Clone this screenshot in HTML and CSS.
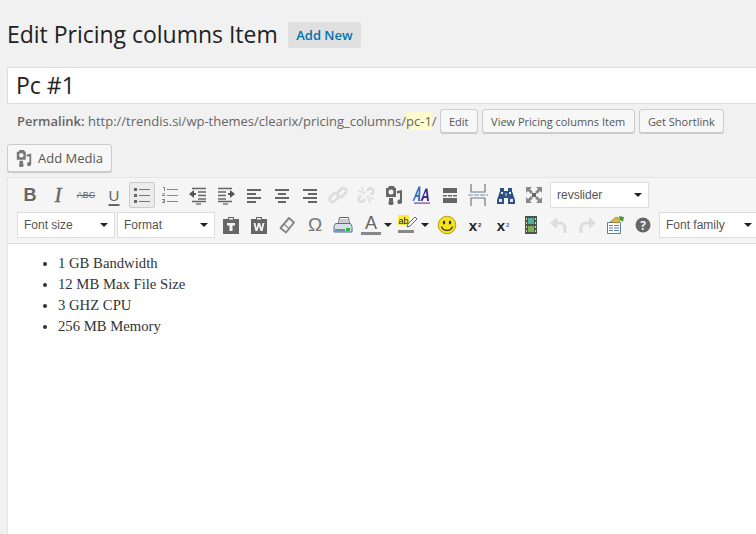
FILE: index.html
```html
<!DOCTYPE html>
<html lang="en">
<head>
<meta charset="utf-8">
<title>Edit Pricing columns Item</title>
<link rel="stylesheet" href="styles.css">
</head>
<body>
<main class="wrap">
  <header class="head">
    <h1 class="title">Edit Pricing columns Item</h1>
    <a class="add-new">Add New</a>
  </header>
  <div class="title-input">Pc #1</div>
  <div class="permalink">
    <span class="perm-text"><strong class="perm-label">Permalink:</strong> http://trendis.si/wp-themes/clearix/pricing_columns/<span class="slug">pc-1</span>/</span>
    <button class="btn">Edit</button>
    <button class="btn">View Pricing columns Item</button>
    <button class="btn">Get Shortlink</button>
  </div>
  <button class="btn btn-media">
    <svg class="media-ic" viewBox="0 0 20 20"><path fill="#777" d="M2 3h2l1-2h5l1 2h1v9H2zM5 13h4v3.500a2.500 2.500 0 1 1-4 0zM13 6l5-1v11.500a2.300 2.300 0 1 1-2-2V8l-3 .6z"/><circle cx="7" cy="7" r="2.500" fill="#f7f7f7"/></svg>
    Add Media
  </button>
  <section class="editor">
    <div class="toolbar">
      <div class="row">
        <span class="tb t-b">B</span>
        <span class="tb t-i">I</span>
        <span class="tb t-abc">ABC</span>
        <span class="tb t-u">U</span>
        <span class="tb active"><svg class="ic" viewBox="0 0 20 20"><path fill="#666" d="M2 3h3v3H2zM2 9h3v3H2zM2 15h3v3H2z"/><path stroke="#777" stroke-width="1.200" d="M7 4.500h11M7 10.500h11M7 16.500h11"/></svg></span>
        <span class="tb"><svg class="ic" viewBox="0 0 20 20"><path fill="#888" d="M3 2h2v4H4V3H3zM2 8h3v1l-2 1h2v1H2v-1l2-1v-.5H2zM2 14h3v4H2v-1h2v-.5H3v-1h1V15H2z"/><path stroke="#888" stroke-width="1.200" d="M7 4.500h11M7 10.500h11M7 16.500h11"/></svg></span>
        <span class="tb"><svg class="ic" viewBox="0 0 20 20"><path fill="#555" d="M1 9l5-4v3h2v2H6v3z"/><path stroke="#666" stroke-width="1.600" d="M4 3.500h14M10 7h8M10 10.500h8M10 14h8M4 16.500h14"/><path stroke="#666" stroke-width="1.300" d="M8 19h5"/></svg></span>
        <span class="tb"><svg class="ic" viewBox="0 0 20 20"><path fill="#555" d="M19 9l-5-4v3h-2v2h2v3z"/><path stroke="#666" stroke-width="1.600" d="M2 3.500h14M2 7h8M2 10.500h8M2 14h8M2 16.500h14"/><path stroke="#666" stroke-width="1.300" d="M7 19h5"/></svg></span>
        <span class="tb"><svg class="ic" viewBox="0 0 20 20"><path stroke="#666" stroke-width="2" d="M3 5h14M3 9h9M3 13h14M3 17h9"/></svg></span>
        <span class="tb"><svg class="ic" viewBox="0 0 20 20"><path stroke="#666" stroke-width="2" d="M3 5h14M6 9h8M3 13h14M6 17h8"/></svg></span>
        <span class="tb"><svg class="ic" viewBox="0 0 20 20"><path stroke="#666" stroke-width="2" d="M3 5h14M8 9h9M3 13h14M8 17h9"/></svg></span>
        <span class="tb"><svg class="ic" viewBox="0 0 20 20"><g fill="none" stroke="#ddd" stroke-width="2.600"><rect x="9" y="4.500" width="10" height="6" rx="3" transform="rotate(-45 14 7.500)"/><rect x="1" y="9.500" width="10" height="6" rx="3" transform="rotate(-45 6 12.500)"/></g></svg></span>
        <span class="tb"><svg class="ic" viewBox="0 0 20 20"><path fill="none" stroke="#ddd" stroke-width="2.600" d="M11 6l2-2.500a3 3 0 0 1 4 4L15 9.500M9 14l-2 2.500a3 3 0 0 1-4-4L5 10.500"/><path fill="none" stroke="#ddd" stroke-width="1.800" d="M2 6l4 1M6 2l1 4M14 18l-1-4M18 14l-4-1M11 11l2 2M9 9L7 7"/></svg></span>
        <span class="tb"><svg class="ic" viewBox="0 0 20 20"><path fill="#666" d="M2 3h2l1-2h5l1 2h1v9H2zM5 13h4v3.500a2.500 2.500 0 1 1-4 0zM13 6l5-1v11.500a2.300 2.300 0 1 1-2-2V8l-3 .6z"/><circle cx="7" cy="7" r="2.500" fill="#f5f5f5"/></svg></span>
        <span class="tb"><svg class="ic" viewBox="0 0 20 20"><path fill="#3b6fc4" d="M6.500 1.500h2L8 16H6l.2-4H4l-2 4H.5zM6.400 10l.3-5L4.800 10z"/><path fill="#3a2e8c" d="M13.500 3.500h2l1.500 12.500h-2l-.3-3h-2.700l-1.600 3H8.500zM14.500 11l-.5-4.500-2.300 4.500z"/><path fill="#7a3fa0" d="M2 17.500h16v1.200H2z"/></svg></span>
        <span class="tb"><svg class="ic" viewBox="0 0 20 20"><path fill="#666" d="M3 3h14v5H3zM3 13h14v5H3z"/><path fill="#666" d="M3 10h4v1.500H3zM8 10h4v1.500H8zM13 10h4v1.500h-4z"/></svg></span>
        <span class="tb"><svg class="ic ic-tall" viewBox="0 0 20 22"><path fill="none" stroke="#777" stroke-width="1.200" d="M3 0v8h14V0M3 22v-8h14v8"/><path stroke="#6d8fb8" stroke-width="1.200" stroke-dasharray="5 1" d="M0 11h20"/></svg></span>
        <span class="tb"><svg class="ic" viewBox="0 0 20 20"><path fill="#2f527f" d="M4 3h4v3h4V3h4v3l3 9v4h-7v-6H8v6H1v-4l3-9z"/><path fill="#dfe8f2" d="M5 7h2v2H5zM13 7h2v2h-2zM3 14h3v3H3zM14 14h3v3h-3z"/><path fill="#7ea0c8" d="M9 8h2v3H9z"/></svg></span>
        <span class="tb"><svg class="ic" viewBox="0 0 20 20"><path fill="#888" d="M2 2h6L6 4l3 3-2 2-3-3-2 2zM18 2v6l-2-2-3 3-2-2 3-3-2-2zM2 18v-6l2 2 3-3 2 2-3 3 2 2zM18 18h-6l2-2-3-3 2-2 3 3 2-2z"/><path fill="#666" d="M8 8h4v4H8z"/></svg></span>
        <span class="sel sel-rev"><span class="sel-text">revslider</span><i class="caret"></i></span>
      </div>
      <div class="row row-2">
        <span class="sel sel-size"><span class="sel-text">Font size</span><i class="caret"></i></span>
        <span class="sel sel-size"><span class="sel-text">Format</span><i class="caret"></i></span>
        <span class="tb"><svg class="ic" viewBox="0 0 20 20"><path fill="#666" d="M2 4h5V2h6v2h5v15H2z"/><path fill="#f5f5f5" d="M8 3h4v1.500H8zM6 8h8v2.500h-2.500V16h-3v-5.500H6z"/></svg></span>
        <span class="tb"><svg class="ic" viewBox="0 0 20 20"><path fill="#666" d="M2 4h5V2h6v2h5v15H2z"/><path fill="#f5f5f5" d="M8 3h4v1.500H8zM4.500 8h2l1 5 1.500-5h2l1.500 5 1-5h2l-2 8h-2L10 11l-1.500 5h-2z"/></svg></span>
        <span class="tb"><svg class="ic" viewBox="0 0 20 20"><path fill="none" stroke="#888" stroke-width="2" stroke-linejoin="round" d="M12 3l5 4.500-8 10L3.500 13z"/><path stroke="#888" stroke-width="1.200" d="M7 9l5.500 5"/></svg></span>
        <span class="tb t-omega">Ω</span>
        <span class="tb"><svg class="ic" viewBox="0 0 20 20"><path fill="#fff" stroke="#667" d="M6.500 2.500h9l1 6h-11z"/><path stroke="#99a" d="M7 5h8M7 7h8"/><path fill="#d5dee9" stroke="#56708f" d="M2.500 8.500h15l1.500 3v5.500H1v-5.500z"/><path fill="#6f8cae" d="M2 14h10v2.500H2z"/><path fill="#27b53b" d="M13 13h4v3h-4z"/></svg></span>
        <span class="tb split split-a"><span class="t-color">A</span><i class="caret caret-dark"></i></span>
        <span class="tb split split-h"><svg class="ic" viewBox="0 0 20 20"><path fill="#f7ee3c" d="M0 0h11v10H0z"/><path fill="#888" d="M0 15h16v3H0z"/><path fill="#fff" stroke="#4a6a9c" d="M9 12l1-3 7-7 2 2-7 7z"/><text class="ab" x="0.500" y="9">ab</text></svg><i class="caret caret-dark"></i></span>
        <span class="tb"><svg class="ic" viewBox="0 0 20 20"><circle cx="10" cy="10" r="8.800" fill="#f6e31a" stroke="#9c8a10" stroke-width=".8"/><ellipse cx="7" cy="7.500" rx="1.200" ry="2" fill="#333"/><ellipse cx="13" cy="7.500" rx="1.200" ry="2" fill="#333"/><path fill="none" stroke="#333" stroke-width="1.200" d="M4.500 11.500a5.800 5.800 0 0 0 11 0"/></svg></span>
        <span class="tb t-script">x<sup class="sup">2</sup></span>
        <span class="tb t-script">x<sub class="sub">2</sub></span>
        <span class="tb"><svg class="ic" viewBox="0 0 20 20"><path fill="#4a5550" d="M4 1h12v18H4z"/><path fill="#4fb0a0" d="M7 3h6v6H7z"/><path fill="#7fb050" d="M7 11h6v6H7z"/><path fill="#d9d9c0" d="M5 3h1v2H5zM5 7h1v2H5zM5 11h1v2H5zM5 15h1v2H5zM14 3h1v2h-1zM14 7h1v2h-1zM14 11h1v2h-1zM14 15h1v2h-1z"/></svg></span>
        <span class="tb"><svg class="ic" viewBox="0 0 20 20"><path fill="none" stroke="#ddd" stroke-width="3" d="M5 8h6a5 5 0 0 1 5 5v5"/><path fill="#ddd" d="M8 2v12L1 8z"/></svg></span>
        <span class="tb"><svg class="ic" viewBox="0 0 20 20"><path fill="none" stroke="#ddd" stroke-width="3" d="M15 8H9a5 5 0 0 0-5 5v5"/><path fill="#ddd" d="M12 2v12l7-6z"/></svg></span>
        <span class="tb"><svg class="ic" viewBox="0 0 20 20"><path fill="#fff" stroke="#5b7fa8" d="M2.500 7.500h13v11h-13z"/><path stroke="#5b7fa8" d="M4 10.500h4M4 13h4M4 15.500h4M9 10.500h5M9 13h5M9 15.500h5"/><path fill="#d9b648" stroke="#8f7420" stroke-width=".6" d="M5 7l6-5 5 2-3 4z"/><path fill="#4c9a3c" d="M14 1l5 1-1 5-3-2z"/></svg></span>
        <span class="tb"><svg class="ic" viewBox="0 0 20 20"><circle cx="10" cy="10" r="7.500" fill="#666"/><text class="help" x="10" y="14.500">?</text></svg></span>
        <span class="sel sel-family"><span class="sel-text">Font family</span><i class="caret"></i></span>
      </div>
    </div>
    <div class="content">
      <ul class="list">
        <li>1 GB Bandwidth</li>
        <li>12 MB Max File Size</li>
        <li>3 GHZ CPU</li>
        <li>256 MB Memory</li>
      </ul>
    </div>
  </section>
</main>
</body>
</html>
```
FILE: styles.css
```css
* { box-sizing: border-box; }
html, body { margin: 0; height: 100%; overflow: hidden; background: #f1f1f1; }
body { font-family: "Open Sans", sans-serif; color: #444; }
.wrap { width: 820px; height: 534px; padding: 0 0 0 7px; display: flex; flex-direction: column; }
.head { display: flex; align-items: center; height: 26px; margin-top: 22px; gap: 10px; }
.title { margin: -2px 0 0; font-size: 23px; letter-spacing: -.02px; font-weight: 400; color: #222; line-height: 26px; }
.add-new { height: 26px; padding: 0 8.500px; background: #e0e0e0; color: #0073aa; font-size: 13px; font-weight: 600; line-height: 27px; border-radius: 2px; }
.title-input { margin-top: 19px; height: 37px; background: #fff; border: 1px solid #ddd; font-size: 23px; line-height: 34px; padding-left: 8px; color: #222; }
.permalink { display: flex; align-items: flex-start; height: 24px; margin-top: 5px; padding-left: 10px; font-size: 13px; color: #666; gap: 4px; white-space: nowrap; }
.perm-text { margin-top: 3px; margin-right: -1px; }
.perm-label { font-weight: 600; color: #666; }
.slug { background: #fffbcc; }
.btn { height: 24px; padding: 0 8.300px; font: 400 11px "Open Sans", sans-serif; color: #555; background: #f7f7f7; border: 1px solid #ccc; border-radius: 3px; box-shadow: 0 1px 0 #ccc; white-space: nowrap; }
.btn-media { align-self: flex-start; display: flex; align-items: center; gap: 5px; width: 105px; height: 28px; margin-top: 11px; padding: 0 0 0 7px; font-size: 13px; }
.media-ic { flex: none; width: 18px; height: 18px; }
.editor { flex: 1; margin-top: 5px; display: flex; flex-direction: column; border: 1px solid #e5e5e5; border-right: 0; border-bottom: 0; background: #fff; }
.toolbar { height: 66px; background: #f5f5f5; border-bottom: 1px solid #ddd; padding: 2px 0 0 8px; }
.row { display: flex; align-items: center; height: 30px; }
.row-2 { margin-left: 1px; }
.tb { flex: none; display: flex; align-items: center; justify-content: center; width: 28px; height: 26px; border: 1px solid transparent; color: #666; }
.active { background: #ececec; border-color: #ccc; border-radius: 2px; margin: 0 1px; width: 26px; }
.ic { width: 20px; height: 20px; display: block; }
.ic-tall { height: 22px; }
.t-b { font: 700 18px "Liberation Sans", sans-serif; }
.t-i { font: italic 400 20px "Liberation Serif", serif; -webkit-text-stroke: .5px #666; }
.t-abc { font: 400 9px "Liberation Sans", sans-serif; text-decoration: line-through; }
.t-u { font: 400 15px "Liberation Sans", sans-serif; text-decoration: underline; text-underline-offset: 3px; text-decoration-thickness: 2px; }
.t-omega { font: 400 19px "Liberation Sans", sans-serif; color: #777; }
.t-color { width: 20px; text-align: center; font: 400 18px/17px "Liberation Sans", sans-serif; color: #666; border-bottom: 3px solid #888; }
.split { gap: 3px; justify-content: flex-start; padding: 0; }
.split-a { width: 40px; padding-left: 3px; }
.split-h { width: 36px; }
.caret { flex: none; width: 0; height: 0; border: 4px solid transparent; border-top: 4px solid #222; border-bottom: 0; }
.caret-dark { border-left-width: 4px; border-right-width: 4px; }
.ab { font: 400 9px "Liberation Sans", sans-serif; fill: #222; }
.help { font: 700 12px "Open Sans", sans-serif; fill: #f5f5f5; text-anchor: middle; }
.t-script { font: 700 15px "Liberation Sans", sans-serif; color: #222; }
.sup { font-size: 6px; color: #333; line-height: 0; vertical-align: 6px; margin-left: 1px; }
.sub { font-size: 6px; color: #3b6fc4; line-height: 0; vertical-align: -3px; margin-left: 1px; }
.sel { flex: none; display: flex; align-items: center; justify-content: space-between; height: 26px; background: #fff; border: 1px solid #ddd; padding: 0 6px; font: 400 12px "Liberation Sans", sans-serif; color: #555; }
.sel-rev { width: 99px; margin-left: 2px; }
.sel-size { width: 98px; margin-right: 2px; }
.sel-family { width: 100px; margin-left: 2px; }
.sel-text { white-space: nowrap; }
.content { flex: 1; background: #fff; padding: 9px 0 0; }
.list { margin: 0; padding: 0 0 0 50px; font: 400 14.700px/21px "Liberation Serif", serif; color: #333; }
```
